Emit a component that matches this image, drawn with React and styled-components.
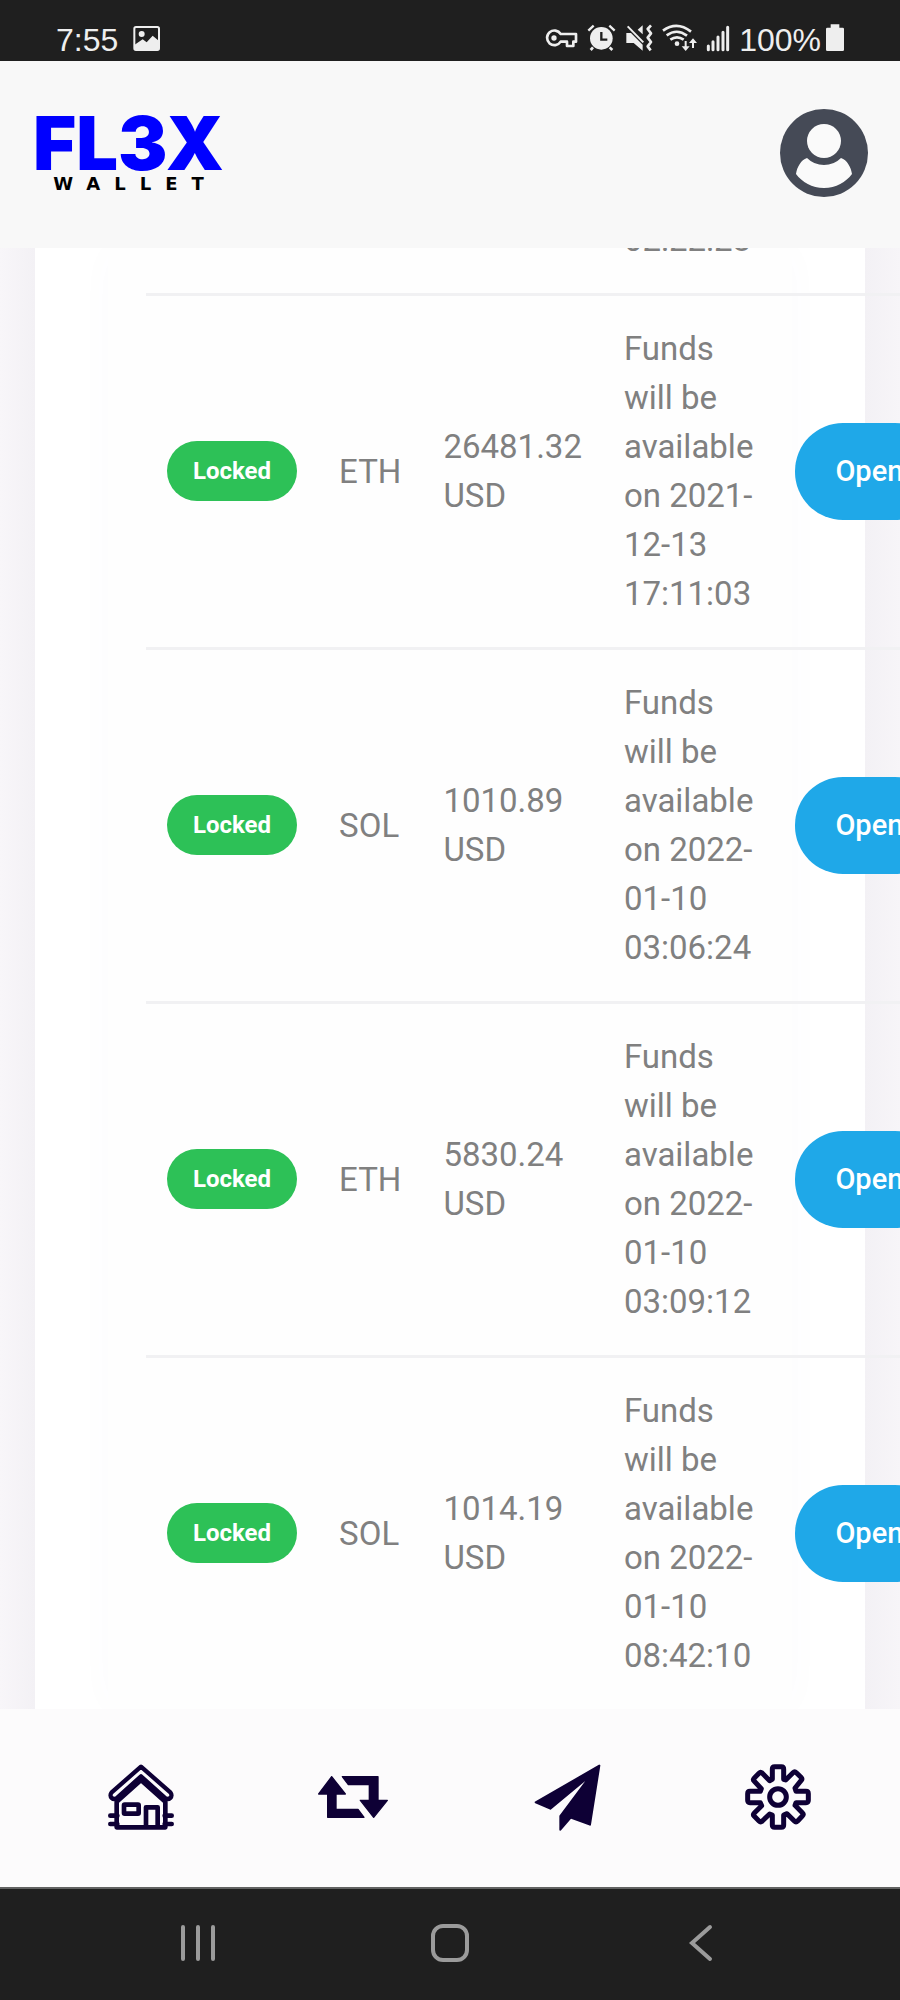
import React from "react";
import styled, { createGlobalStyle } from "styled-components";

const rows = [
  { coin: "ETH", amount: "26481.32", date: "2021-12-13 17:11:03" },
  { coin: "SOL", amount: "1010.89", date: "2022-01-10 03:06:24" },
  { coin: "ETH", amount: "5830.24", date: "2022-01-10 03:09:12" },
  { coin: "SOL", amount: "1014.19", date: "2022-01-10 08:42:10" },
];

export default function App() {
  return (
    <>
      <GlobalStyle />
      <Screen>
        <StatusBar>
          <StatusGroup $gap={14}>
            <StatusText>7:55</StatusText>
            <PictureIcon />
          </StatusGroup>
          <StatusGroup $gap={9}>
            <KeyIcon />
            <AlarmIcon />
            <MuteIcon />
            <WifiIcon />
            <SignalIcon />
            <StatusGroup $gap={4}>
              <StatusText>100%</StatusText>
              <BatteryIcon />
            </StatusGroup>
          </StatusGroup>
        </StatusBar>

        <Header>
          <Logo href="#home">
            <LogoName>FL3X</LogoName>
            <LogoSub>WALLET</LogoSub>
          </Logo>
          <IconButton aria-label="Profile">
            <AvatarIcon />
          </IconButton>
        </Header>

        <Content>
          <Card>
            <Panel>
              <FundsTable aria-label="Locked funds">
                <tbody>
                  <tr>
                    <Cell colSpan={3} />
                    <Cell>02:22:23</Cell>
                    <Cell />
                  </tr>
                  {rows.map((row) => (
                    <FundsRow key={row.date} {...row} />
                  ))}
                </tbody>
              </FundsTable>
            </Panel>
          </Card>
        </Content>

        <TabBar aria-label="Main">
          <TabLink href="#home" aria-label="Home"><HouseIcon /></TabLink>
          <TabLink href="#swap" aria-label="Swap"><SwapIcon /></TabLink>
          <TabLink href="#send" aria-label="Send"><SendIcon /></TabLink>
          <TabLink href="#settings" aria-label="Settings"><GearIcon /></TabLink>
        </TabBar>

        <SystemBar>
          <IconButton aria-label="Recent apps"><RecentsIcon /></IconButton>
          <IconButton aria-label="Home screen"><HomeKeyIcon /></IconButton>
          <IconButton aria-label="Back"><BackIcon /></IconButton>
        </SystemBar>
      </Screen>
    </>
  );
}

function FundsRow({ coin, amount, date }) {
  return (
    <tr>
      <Cell><Badge>Locked</Badge></Cell>
      <Cell>{coin}</Cell>
      <Cell>{amount} USD</Cell>
      <Cell>Funds will be available on {date}</Cell>
      <Cell><OpenButton>Open</OpenButton></Cell>
    </tr>
  );
}

//status bar icons
const PictureIcon = () => (
  <svg width="29" height="28" viewBox="396 72 87 84">
    <rect x="403" y="81" width="74" height="69" rx="5" fill="none" stroke="#eee" strokeWidth="6" />
    <circle cx="425" cy="102" r="9" fill="#eee" />
    <path d="M404 134l24-16 12 9 18-20 19 16v27h-73z" fill="#eee" />
  </svg>
);

const KeyIcon = () => (
  <svg width="33" height="28" viewBox="288 72 99 84">
    <path d="M335 102h46v23h-8v13h-19v-13h-19a22 22 0 1 1 0-23z" fill="none" stroke="#eee" strokeWidth="8" strokeLinejoin="round" />
    <circle cx="315" cy="114" r="8" fill="#eee" />
  </svg>
);

const AlarmIcon = () => (
  <svg width="29" height="28" viewBox="414 72 87 84">
    <circle cx="457" cy="115" r="34" fill="#eee" />
    <path d="M418 92l16-15M497 92l-16-15" stroke="#eee" strokeWidth="7" />
    <path d="M432 142l-7 8M482 142l8 8" stroke="#eee" strokeWidth="8" />
    <path d="M457 96v23h18" fill="none" stroke="#1f1f1f" strokeWidth="7" />
  </svg>
);

const MuteIcon = () => (
  <svg width="28" height="28" viewBox="528 72 84 84">
    <path d="M532 99h14l35 35v18l-27-23h-22z" fill="#eee" />
    <path d="M581 76v27l-15-14z" fill="#eee" />
    <path d="M536 79l47 48" stroke="#eee" strokeWidth="6" />
    <path d="M606 76l-10 11 10 13-10 13 10 13-10 13 9 12" fill="none" stroke="#eee" strokeWidth="8" strokeLinejoin="round" />
  </svg>
);

const WifiIcon = () => (
  <svg width="35" height="28" viewBox="639 72 105 84">
    <g fill="none" stroke="#eee" strokeWidth="8">
      <path d="M642 92q42-30 84 3" />
      <path d="M653 106q31-22 61 1" />
      <path d="M664 119q20-14 40 0" />
      <path d="M710 123v20M732 144v-21" strokeWidth="6" />
    </g>
    <circle cx="684" cy="131" r="7" fill="#eee" />
    <path d="M698 139h24l-12 14zM720 129h24l-12-14z" fill="#eee" />
  </svg>
);

const SignalIcon = () => (
  <svg width="24" height="28" viewBox="762 72 72 84">
    <path d="M769 138v11M783 125v24M798 111v38M813 97v52M827 82v67" stroke="#eee" strokeWidth="9" strokeLinecap="round" />
  </svg>
);

const BatteryIcon = () => (
  <svg width="20" height="28" viewBox="1125 72 60 84">
    <path d="M1142 73h26v10h10q4 0 4 4v62q0 4-4 4h-46q-4 0-4-4v-62q0-4 4-4h10z" fill="#eee" />
  </svg>
);

const AvatarIcon = () => (
  <svg width="90" height="90" viewBox="0 0 90 90">
    <circle cx="45" cy="45" r="44" fill="#454a56" />
    <circle cx="45" cy="33" r="17" fill="#fafafa" />
    <path d="M28 50c-6 2-10 9-11 16 6 8 16 14 28 14s22-6 28-14c-1-7-5-14-11-16q-7 7-17 7t-17-7z" fill="#fafafa" />
  </svg>
);

//tab icons
const HouseIcon = () => (
  <svg width="66" height="66" viewBox="54 71 198 198" fill="none" stroke="#0e0035" strokeWidth="14" strokeLinejoin="round">
    <path d="M153 79L65 156c-10 12 4 27 17 16l71-64 71 64c13 11 27-4 17-16z" strokeWidth="13" />
    <path d="M153 119L80 184v77h146v-77z" />
    <rect x="102" y="193" width="44" height="27" rx="2" />
    <path d="M168 260v-59h35v59" />
    <path d="M61 226h21M61 251h21M224 226h21M224 251h21" strokeLinecap="round" />
  </svg>
);

const SwapIcon = () => (
  <svg width="70" height="42" viewBox="687 121 210 126" fill="#0e0035" stroke="#0e0035" strokeWidth="4" strokeLinejoin="round">
    <path d="M728 123l41 52h-28v46h66l18 24H716v-70h-27z" />
    <path d="M760 123h107v71h28l-41 51-40-51h27v-47h-63z" />
  </svg>
);

const SendIcon = () => (
  <svg width="68" height="68" viewBox="65 73 204 204" overflow="visible" fill="#0e0035" stroke="#0e0035" strokeWidth="6" strokeLinejoin="round">
    <path d="M267 81L76 191l44 19 112-93zM267 81l-28 177-58-21-31 36v-41l89-119z" />
  </svg>
);

const GearIcon = () => (
  <svg width="66" height="66" viewBox="-99 -99 198 198" fill="none" stroke="#0e0035" strokeWidth="15" strokeLinejoin="round">
    <circle r="25" />
    <path d="M-17-53v-31q0-7 7-7h20q7 0 7 7v31l6 2 22-22q5-5 10 0l14 14q5 5 0 10L51-27l3 10h30q7 0 7 7v20q0 7-7 7H54l-3 8 22 22q5 5 0 10L59 72q-5 5-10 0L27 50l-10 4v30q0 7-7 7h-20q-7 0-7-7V54l-8-3-22 21q-5 5-10 0l-14-14q-5-5 0-10l22-22-4-9h-31q-7 0-7-7v-20q0-7 7-7h31l3-8-21-22q-5-5 0-10l14-14q5-5 10 0l22 22z" />
  </svg>
);

//system keys
const RecentsIcon = () => (
  <svg width="38" height="38" viewBox="0 0 38 38" stroke="#9b9b9b" strokeWidth="4" strokeLinecap="round">
    <path d="M4 3v32M19 3v32M34 3v32" />
  </svg>
);

const HomeKeyIcon = () => (
  <svg width="40" height="40" viewBox="0 0 40 40" fill="none" stroke="#9b9b9b" strokeWidth="4">
    <rect x="3" y="3" width="34" height="34" rx="10" />
  </svg>
);

const BackIcon = () => (
  <svg width="38" height="38" viewBox="0 0 38 38" fill="none" stroke="#9b9b9b" strokeWidth="4" strokeLinecap="round">
    <path d="M27 3L9 19l18 16" />
  </svg>
);

const GlobalStyle = createGlobalStyle`
  * {
    box-sizing: border-box;
  }
  body {
    margin: 0;
    font-family: Roboto, "Liberation Sans", sans-serif;
    background: #1f1f1f;
  }
  svg {
    display: block;
  }
`;

const Screen = styled.div`
  display: flex;
  flex-direction: column;
  height: 100vh;
  overflow: hidden;
`;

const StatusBar = styled.div`
  display: flex;
  justify-content: space-between;
  height: 61px;
  padding: 15px 55px 0 56px;
  flex-shrink: 0;
  background: #1f1f1f;
`;

const StatusGroup = styled.div`
  display: flex;
  align-items: center;
  gap: ${(props) => props.$gap}px;
`;

const StatusText = styled.span`
  padding-top: 4px;
  font-family: "Liberation Sans", sans-serif;
  font-size: 32px;
  color: #eeeeee;
`;

const Header = styled.header`
  display: flex;
  align-items: center;
  justify-content: space-between;
  flex-shrink: 0;
  height: 187px;
  padding: 0 31px 4px 33px;
  background: #f8f8f8;
`;

const Logo = styled.a`
  display: flex;
  flex-direction: column;
  align-items: center;
  gap: 2px;
  padding-top: 2px;
  text-decoration: none;
`;

const LogoName = styled.span`
  font-family: Inter, sans-serif;
  font-size: 74px;
  font-weight: 900;
  line-height: 58px;
  color: #0000ff;
`;

const LogoSub = styled.span`
  padding-left: 14px;
  font-family: "DejaVu Sans", sans-serif;
  font-size: 18px;
  font-weight: 700;
  line-height: 20px;
  letter-spacing: 14px;
  color: #000000;
`;

const IconButton = styled.button`
  display: flex;
  align-items: center;
  justify-content: center;
  padding: 0;
  border: none;
  background: none;
  cursor: pointer;
`;

const Content = styled.main`
  display: flex;
  flex: 1;
  min-height: 0;
  padding: 0 35px;
  overflow: hidden;
  background: linear-gradient(to right, #f8f6f9, #f3f1f5 35px, #f3f1f5 calc(100% - 35px), #f7f5f8);
`;

const Card = styled.section`
  display: flex;
  flex: 1;
  min-width: 0;
  padding: 0 73px;
  background: #ffffff;
`;

/* scrolled to the end of the list */
const Panel = styled.div`
  display: flex;
  flex: 1;
  flex-direction: column;
  justify-content: flex-end;
  min-width: 0;
  padding: 0 38px;
  background: #fefefe;
  box-shadow: 0 0 40px rgba(80, 70, 130, 0.02);
`;

const FundsTable = styled.table`
  width: 100%;
  border-collapse: separate;
  border-spacing: 0;
`;

const Cell = styled.td`
  padding: 28px 21px 29px;
  border-top: 3px solid #f1f1f3;
  font-size: 33px;
  line-height: 49px;
  color: #808080;
  vertical-align: middle;
`;

const Badge = styled.span`
  display: block;
  padding: 0 26px;
  border-radius: 30px;
  background: #2dc157;
  color: #ffffff;
  font-size: 24px;
  font-weight: 700;
  line-height: 60px;
`;

const OpenButton = styled.button`
  display: block;
  padding: 0 40px;
  border: none;
  border-radius: 48px;
  background: #1fa8e8;
  color: #ffffff;
  font-family: inherit;
  font-size: 29px;
  font-weight: 500;
  line-height: 97px;
  cursor: pointer;
`;

const TabBar = styled.nav`
  display: grid;
  grid-template-columns: repeat(4, 1fr);
  flex-shrink: 0;
  height: 178px;
  padding: 0 16px 2px 35px;
  background: #fcfbfc;
`;

const TabLink = styled.a`
  display: flex;
  align-items: center;
  justify-content: center;
`;

const SystemBar = styled.div`
  display: grid;
  grid-template-columns: repeat(3, 1fr);
  flex-shrink: 0;
  height: 113px;
  padding: 0 72px 4px;
  border-top: 2px solid #626262;
  background: #1f1f1f;
`;
